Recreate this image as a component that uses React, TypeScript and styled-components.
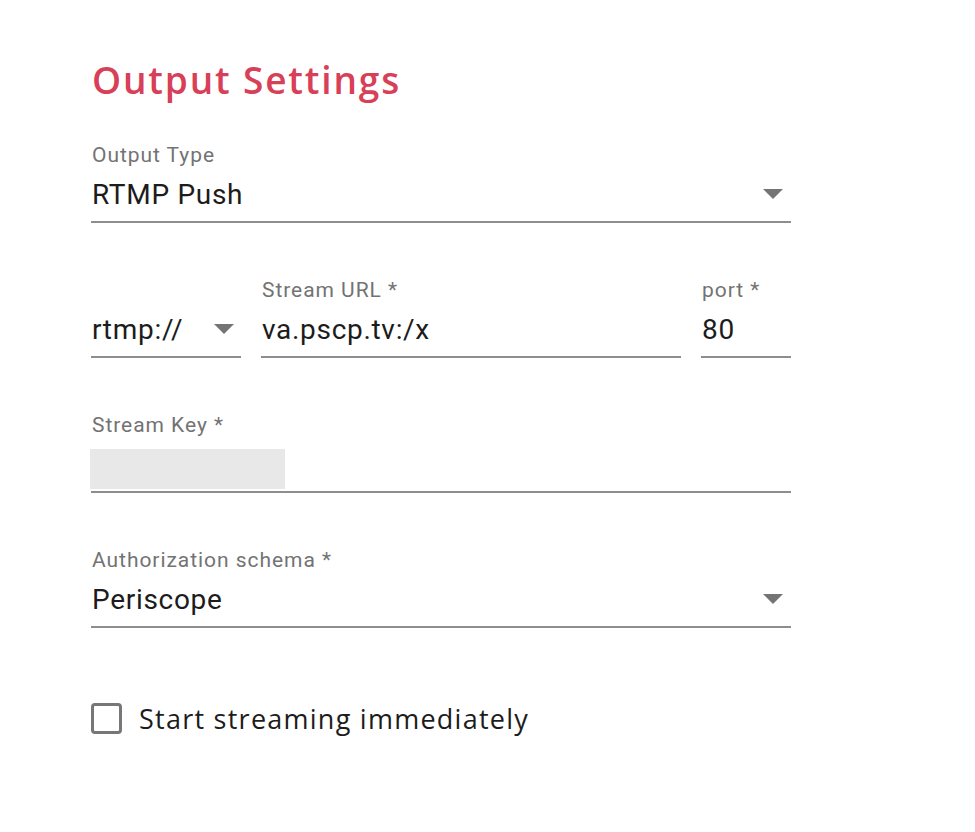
import React from "react";
import styled, { createGlobalStyle } from "styled-components";

const Global = createGlobalStyle`
  html, body { margin: 0; padding: 0; background: #ffffff; }
  body { font-family: Roboto, "Liberation Sans", sans-serif; }
`;

const Page = styled.div`
  width: 975px;
  min-height: 832px;
  box-sizing: border-box;
  padding: 58px 0 0 91px;
`;

const Form = styled.div`
  width: 700px;
  display: flex;
  flex-direction: column;
`;

const Title = styled.h1`
  margin: 0 0 41px 1px;
  font-family: "Open Sans", sans-serif;
  font-weight: 600;
  font-size: 37px;
  letter-spacing: 1.85px;
  line-height: 44px;
  color: #d83f58;
`;

const Fields = styled.div`
  display: flex;
  flex-direction: column;
  gap: 55px;
`;

const Row = styled.div`
  display: grid;
  grid-template-columns: 150px 1fr 90px;
  column-gap: 20px;
  align-items: end;
`;

const Field = styled.div`
  display: flex;
  flex-direction: column;
`;

const Label = styled.div`
  font-size: 21px;
  letter-spacing: 0.95px;
  line-height: 24px;
  color: #737373;
  padding-left: 1px;
`;

const Control = styled.div<{ $pad?: number }>`
  height: 56px;
  box-sizing: border-box;
  display: flex;
  align-items: center;
  justify-content: space-between;
  border-bottom: 2px solid #8e8e8e;
  padding-right: ${(p) => p.$pad ?? 8}px;
`;

const Value = styled.span`
  font-size: 28px;
  letter-spacing: 0.7px;
  color: #1c1c1c;
  padding-left: 1px;
`;

const Caret = styled.span`
  width: 0;
  height: 0;
  border-left: 10px solid transparent;
  border-right: 10px solid transparent;
  border-top: 10px solid #747474;
`;

const KeyControl = styled(Control)`
  align-items: flex-end;
  padding-bottom: 2px;
`;

const Masked = styled.div`
  width: 195px;
  height: 40px;
  margin-left: -1px;
  background: #e8e8e8;
`;

const CheckRow = styled.label`
  margin-top: 72px;
  display: flex;
  align-items: center;
  gap: 17px;
  cursor: pointer;
`;

const Box = styled.span`
  width: 31px;
  height: 31px;
  box-sizing: border-box;
  border: 3px solid #777777;
  border-radius: 4px;
`;

const CheckText = styled.span`
  font-family: "Open Sans", sans-serif;
  font-size: 27px;
  letter-spacing: 1.25px;
  color: #1c1c1c;
`;

export default function App() {
  return (
    <>
      <Global />
      <Page>
        <Form>
          <Title>Output Settings</Title>
          <Fields>
            <Field>
              <Label>Output Type</Label>
              <Control>
                <Value>RTMP Push</Value>
                <Caret />
              </Control>
            </Field>
            <Row>
              <Field>
                <Control $pad={7}>
                  <Value>rtmp://</Value>
                  <Caret />
                </Control>
              </Field>
              <Field>
                <Label>Stream URL *</Label>
                <Control>
                  <Value>va.pscp.tv:/x</Value>
                </Control>
              </Field>
              <Field>
                <Label>port *</Label>
                <Control>
                  <Value>80</Value>
                </Control>
              </Field>
            </Row>
            <Field>
              <Label>Stream Key *</Label>
              <KeyControl>
                <Masked />
              </KeyControl>
            </Field>
            <Field>
              <Label>Authorization schema *</Label>
              <Control>
                <Value>Periscope</Value>
                <Caret />
              </Control>
            </Field>
          </Fields>
          <CheckRow>
            <Box />
            <CheckText>Start streaming immediately</CheckText>
          </CheckRow>
        </Form>
      </Page>
    </>
  );
}
